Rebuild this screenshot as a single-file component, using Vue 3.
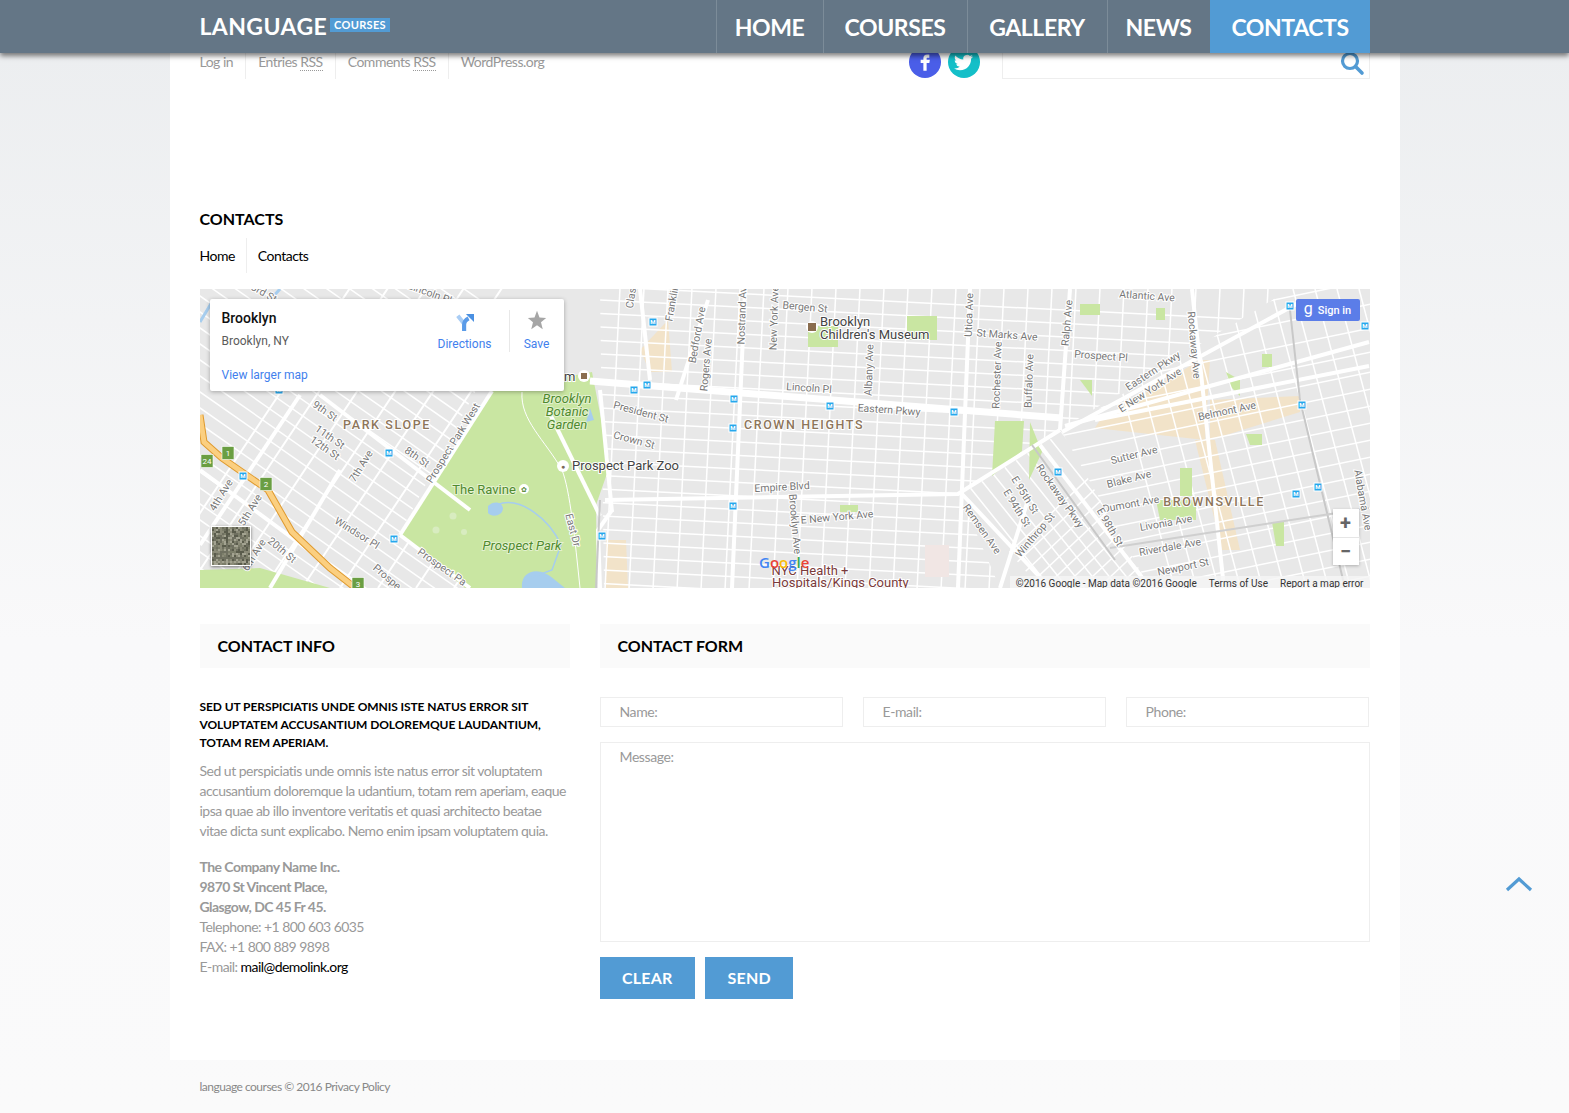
<script setup>
// roads are generated as families of parallel lines, each family clipped to its district
function family(x1, y1, x2, y2, dx, dy, n, w = 1.5) {
  const out = []
  for (let i = 0; i < n; i++) {
    out.push({ x1: x1 + dx * i, y1: y1 + dy * i, x2: x2 + dx * i, y2: y2 + dy * i, w })
  }
  return out
}

const parkSlope = [
  ...family(180, 90, 640, 412, 0, 16, 34),
  ...family(150, 588, 350, 288, 38, 0, 14, 2),
]
const centre = [
  ...family(590, 286, 1300, 322, 0, 13.5, 24),
  ...family(620, 288, 605, 590, 24, 0, 30),
]
const brownsville = [
  ...family(1040, 440, 1400, 366, 0, 17, 18),
  ...family(1040, 300, 1400, 226, 0, 24, 6),
  ...family(1095, 289, 1175, 590, 22, 0, 14),
]
const diagonal = [
  ...family(900, 400, 1140, 700, 17, 0, 18),
  ...family(980, 580, 1140, 430, 0, 17, 10),
]

const thickRoads = [
  'M590 381 L1062 418',
  'M1062 432 L1300 302',
  'M1095 420 L1369 366',
  'M1065 426 L1369 342',
  'M605 500 L958 494 L1060 430',
  'M745 289 L732 588',
  'M970 289 L958 588',
  'M1070 289 L1060 430',
  'M1192 289 L1224 588',
  'M708 300 L676 400',
  'M548 410 L600 516',
  'M400 535 L492 391',
  'M400 535 L470 588',
  'M962 494 L1050 588',
  'M1040 445 L1150 588',
  'M600 390 L612 512',
  'M612 510 L598 530 L600 588',
  'M1000 588 L1028 500',
  'M340 470 L270 588',
  'M300 395 L200 545',
  'M200 470 L360 588',
  'M320 395 L470 510',
  'M640 289 L650 380',
]

const greens = [
  'M400 533 L492 391 L592 372 L610 465 L596 505 L597 588 L465 588 Z',
  'M808 326 L838 326 L838 347 L808 347 Z',
  'M907 316 L937 316 L937 340 L907 340 Z',
  'M995 421 L1024 421 L1022 451 L992 476 Z',
  'M1030 422 L1042 452 L1029 480 Z',
  'M1080 304 L1100 304 L1100 315 L1080 315 Z',
  'M1156 308 L1165 308 L1165 320 L1156 320 Z',
  'M1226 372 L1240 380 L1240 396 L1232 388 Z',
  'M1262 354 L1272 354 L1272 367 L1262 367 Z',
  'M1180 468 L1192 468 L1192 496 L1180 496 Z',
  'M1156 500 L1196 500 L1196 520 L1160 520 Z',
  'M1272 522 L1284 522 L1284 546 L1276 546 Z',
  'M840 505 L858 505 L858 512 L840 512 Z',
  'M200 588 L200 570 L260 568 L330 588 Z',
  'M1246 434 L1262 434 L1262 445 L1250 445 Z',
  'M1080 380 L1092 380 L1092 396 Z',
]

const beige = [
  'M1100 420 L1200 360 L1210 360 L1205 440 L1095 428 Z',
  'M1210 400 L1300 396 L1300 412 L1210 440 Z',
  'M1195 440 L1215 440 L1240 550 L1222 550 Z',
  'M640 350 L668 320 L672 372 L650 372 Z',
  'M606 540 L626 540 L628 588 L606 588 Z',
]

const transit = [
  [653, 322], [634, 390], [647, 385], [734, 399], [830, 406], [954, 412], [389, 453], [394, 539],
  [602, 536], [733, 506], [1058, 472], [1302, 405], [1318, 487], [1296, 494], [1365, 326], [1290, 306],
  [279, 390], [733, 428], [243, 476],
]

const shields = [
  { t: '1', x: 228, y: 453 },
  { t: '2', x: 266, y: 484 },
  { t: '3', x: 358, y: 584 },
  { t: '24', x: 207, y: 461 },
]

const streets = [
  ['3rd St', 264, 293, 30], ['Lincoln Pl', 430, 293, 20], ['Clas', 631, 298, -80], ['Franklin', 672, 303, -80],
  ['Bedford Ave', 697, 335, -80], ['Rogers Ave', 706, 365, -85], ['Nostrand Ave', 742, 313, -88],
  ['New York Ave', 774, 318, -88], ['Bergen St', 805, 307, 5], ['Albany Ave', 869, 370, -88],
  ['Utica Ave', 969, 315, -88], ['St Marks Ave', 1007, 335, 4], ['Ralph Ave', 1067, 323, -85],
  ['Atlantic Ave', 1147, 296, 4], ['Rockaway Ave', 1194, 345, 85], ['Prospect Pl', 1101, 356, 4],
  ['Rochester Ave', 997, 375, -88], ['Buffalo Ave', 1029, 381, -88], ['Lincoln Pl', 809, 388, 4],
  ['Eastern Pkwy', 889, 410, 4], ['Eastern Pkwy', 1153, 371, -33], ['E New York Ave', 1150, 390, -33],
  ['Belmont Ave', 1227, 411, -12], ['President St', 641, 412, 15], ['Crown St', 634, 440, 15],
  ['Empire Blvd', 782, 487, -3], ['Sutter Ave', 1134, 455, -14], ['Blake Ave', 1129, 479, -14],
  ['Dumont Ave', 1131, 504, -10], ['Livonia Ave', 1166, 523, -10], ['Riverdale Ave', 1170, 547, -10],
  ['Newport St', 1183, 567, -12], ['E New York Ave', 837, 517, -5], ['Brooklyn Ave', 795, 524, 85],
  ['Alabama Ave', 1363, 500, 80], ['Rockaway Pkwy', 1060, 496, 55], ['E 95th St', 1025, 495, 58],
  ['E 94th St', 1017, 508, 58], ['E 98th St', 1110, 527, 60], ['Remsen Ave', 982, 529, 55],
  ['Winthrop St', 1035, 535, -50], ['9th St', 325, 411, 35], ['11th St', 330, 437, 35],
  ['12th St', 325, 448, 35], ['8th St', 417, 457, 35], ['7th Ave', 361, 466, -58],
  ['Prospect Park West', 453, 443, -58], ['4th Ave', 221, 495, -58], ['5th Ave', 250, 510, -58],
  ['6th Ave', 254, 555, -58], ['20th St', 282, 550, 40], ['Windsor Pl', 357, 533, 32],
  ['Prospect Pa', 442, 567, 35], ['Prospe', 387, 577, 40], ['East Dr', 573, 530, 75],
]

// speckle for the satellite thumbnail
const speckle = []
for (let y = 0; y < 19; y++) {
  for (let x = 0; x < 19; x++) {
    const v = (x * 37 + y * 61 + x * y * 13 + (x ^ y) * 7) % 5
    speckle.push({ x: x * 2, y: y * 2, fill: ['#6f7060', '#8b8b78', '#a3a391', '#5a5c4c', '#7c7e6a'][v] })
  }
}

const nav = ['HOME', 'COURSES', 'GALLERY', 'NEWS', 'CONTACTS']
const topLinks = [
  { text: 'Log in' },
  { text: 'Entries ', abbr: 'RSS' },
  { text: 'Comments ', abbr: 'RSS' },
  { text: 'WordPress.org' },
]
</script>

<template>
  <header class="header">
    <div class="header-inner">
      <a class="logo">LANGUAGE<span class="logo-badge">COURSES</span></a>
      <nav class="nav">
        <a v-for="item in nav" :key="item" class="nav-item" :class="{ active: item === 'CONTACTS' }">{{ item }}</a>
      </nav>
    </div>
  </header>

  <div class="page">
    <div class="top-row">
      <ul class="top-links">
        <li v-for="link in topLinks" :key="link.text">
          {{ link.text }}<abbr v-if="link.abbr">{{ link.abbr }}</abbr>
        </li>
      </ul>
      <div class="social">
        <span class="circle fb">
          <svg viewBox="0 0 24 24" width="26" height="26"><path fill="#fff" d="M14 8h2V5h-2c-2.2 0-3.5 1.4-3.5 3.5V10H8v3h2.5v7h3v-7H16l.5-3h-3V8.6c0-.4.2-.6.5-.6z" /></svg>
        </span>
        <span class="circle tw">
          <svg viewBox="0 0 24 24" width="19" height="19"><path fill="#fff" d="M23.953 4.57a10 10 0 01-2.825.775 4.958 4.958 0 002.163-2.723c-.951.555-2.005.959-3.127 1.184a4.92 4.92 0 00-8.384 4.482C7.69 8.095 4.067 6.13 1.64 3.162a4.822 4.822 0 00-.666 2.475c0 1.71.87 3.213 2.188 4.096a4.904 4.904 0 01-2.228-.616v.06a4.923 4.923 0 003.946 4.827 4.996 4.996 0 01-2.212.085 4.936 4.936 0 004.604 3.417 9.867 9.867 0 01-6.102 2.105c-.39 0-.779-.023-1.17-.067a13.995 13.995 0 007.557 2.209c9.053 0 13.998-7.496 13.998-13.985 0-.21 0-.42-.015-.63A9.935 9.935 0 0024 4.59z" /></svg>
        </span>
      </div>
      <div class="search">
        <svg viewBox="0 0 26 26" width="26" height="26"><circle cx="11" cy="11" r="7.5" fill="none" stroke="#529bd4" stroke-width="3.2" /><path d="M16.5 16.5 L23 23" stroke="#529bd4" stroke-width="3.6" stroke-linecap="round" /></svg>
      </div>
    </div>

    <h1 class="page-title">CONTACTS</h1>
    <ul class="crumbs">
      <li>Home</li>
      <li>Contacts</li>
    </ul>

    <div class="map">
      <svg class="map-svg" viewBox="200 289 1170 299" width="1170" height="299">
        <defs>
          <clipPath id="c-slope"><path d="M200 289 L530 289 L400 533 L470 588 L200 588 Z" /></clipPath>
          <clipPath id="c-centre"><path d="M600 289 L1290 289 L1060 430 L960 495 L1000 588 L604 588 Z" /></clipPath>
          <clipPath id="c-brown"><path d="M1062 432 L1290 289 L1370 289 L1370 588 L1150 588 Z" /></clipPath>
          <clipPath id="c-diag"><path d="M960 495 L1062 432 L1150 588 L1040 588 Z" /></clipPath>
        </defs>
        <rect x="200" y="289" width="1170" height="299" fill="#e8e8e8" />
        <path v-for="(d, i) in beige" :key="'b' + i" :d="d" fill="#f2e3c9" />

        <g clip-path="url(#c-slope)" stroke="#fff">
          <line v-for="(l, i) in parkSlope" :key="i" :x1="l.x1" :y1="l.y1" :x2="l.x2" :y2="l.y2" :stroke-width="l.w" />
        </g>
        <g clip-path="url(#c-centre)" stroke="#fff">
          <line v-for="(l, i) in centre" :key="i" :x1="l.x1" :y1="l.y1" :x2="l.x2" :y2="l.y2" :stroke-width="l.w" />
        </g>
        <g clip-path="url(#c-brown)" stroke="#fff">
          <line v-for="(l, i) in brownsville" :key="i" :x1="l.x1" :y1="l.y1" :x2="l.x2" :y2="l.y2" :stroke-width="l.w" />
        </g>
        <g clip-path="url(#c-diag)" stroke="#fff">
          <line v-for="(l, i) in diagonal" :key="i" :x1="l.x1" :y1="l.y1" :x2="l.x2" :y2="l.y2" :stroke-width="l.w" />
        </g>

        <path v-for="(d, i) in greens" :key="'g' + i" :d="d" fill="#c9e6a2" />

        <path v-for="(d, i) in thickRoads" :key="'r' + i" :d="d" fill="none" stroke="#fff" stroke-width="4" />
        <path d="M590 381 L1062 418" fill="none" stroke="#fff" stroke-width="7" />

        <path d="M200 415 L204 442 L222 458 L268 490 L292 532 L330 568 L358 590" fill="none" stroke="#df9a2e" stroke-width="7" />
        <path d="M200 415 L204 442 L222 458 L268 490 L292 532 L330 568 L358 590" fill="none" stroke="#fbcf80" stroke-width="5" />

        <path d="M1290 310 L1300 400 L1345 588" fill="none" stroke="#c8c8c8" stroke-width="2" />
        <path d="M1032 445 L1115 560" fill="none" stroke="#c8c8c8" stroke-width="2" />
        <path d="M1110 548 L1369 508" fill="none" stroke="#cfcfcf" stroke-width="2" />
        <path d="M600 500 L596 588" fill="none" stroke="#c8c8c8" stroke-width="2" />

        <!-- park water and paths -->
        <path d="M488 506 C494 500 502 502 503 508 C503 516 492 518 488 513 Z M522 588 C520 570 540 565 555 580 L565 588 Z" fill="#a6cdee" />
        <path d="M497 505 C520 495 550 520 561 545 L552 570 L530 578" fill="none" stroke="#a6cdee" stroke-width="1.5" />
        <path d="M590 408 L594 420 L586 422 Z" fill="#a6cdee" />
        <path d="M270 300 L280 289 M200 322 L212 302" fill="none" stroke="#a6cdee" stroke-width="3" />
        <path d="M522 392 C520 420 545 440 562 470 C570 490 575 540 580 588" fill="none" stroke="#fff" stroke-width="1" />
        <circle cx="453" cy="516" r="3.5" fill="#d8ecc0" /><circle cx="436" cy="530" r="3.5" fill="#d8ecc0" /><circle cx="464" cy="532" r="3" fill="#d8ecc0" />

        <rect x="925" y="545" width="24" height="32" fill="#f1e6e4" />

        <g v-for="(m, i) in transit" :key="'t' + i">
          <rect :x="m[0] - 4.5" :y="m[1] - 4.5" width="9" height="9" fill="#fff" />
          <rect :x="m[0] - 3.5" :y="m[1] - 3.5" width="7" height="7" fill="#27a7ec" />
          <text :x="m[0]" :y="m[1] + 2.2" class="m-glyph">M</text>
        </g>

        <g v-for="s in shields" :key="s.t">
          <rect :x="s.x - 6" :y="s.y - 6.5" width="12" height="13" fill="#6a9e42" stroke="#fff" stroke-width="0.6" />
          <text :x="s.x" :y="s.y + 3" class="shield">{{ s.t }}</text>
        </g>

        <text
          v-for="s in streets"
          :key="s[0] + s[1]"
          class="street"
          :transform="`translate(${s[1]} ${s[2]}) rotate(${s[3]})`"
        >{{ s[0] }}</text>

        <text x="387" y="429" class="hood">PARK SLOPE</text>
        <text x="804" y="429" class="hood">CROWN HEIGHTS</text>
        <text x="1214" y="506" class="hood">BROWNSVILLE</text>

        <text x="567" y="403" class="park">Brooklyn</text>
        <text x="567" y="416" class="park">Botanic</text>
        <text x="567" y="429" class="park">Garden</text>
        <text x="522" y="550" class="park">Prospect Park</text>
        <text x="484" y="494" class="park upright">The Ravine</text>
        <circle cx="524" cy="489" r="5" fill="#fff" />
        <text x="524" y="492" class="pin-glyph">✿</text>

        <circle cx="563" cy="466" r="6" fill="#fff" />
        <text x="563" y="469" class="pin-glyph dark">●</text>
        <text x="572" y="470" class="poi">Prospect Park Zoo</text>
        <circle cx="812" cy="327" r="6" fill="#fff" />
        <rect x="808" y="323" width="8" height="8" fill="#8a6d4f" />
        <text x="820" y="326" class="poi">Brooklyn</text>
        <text x="820" y="339" class="poi">Children's Museum</text>
        <text x="564" y="381" class="poi">m</text>
        <circle cx="584" cy="376" r="6" fill="#fff" />
        <rect x="581" y="373" width="6" height="6" fill="#8a6d4f" />

        <text x="810" y="575" class="health">NYC Health +</text>
        <text x="772" y="587" class="health left">Hospitals/Kings County</text>
        <text x="759" y="568" class="google"><tspan fill="#4285f4">G</tspan><tspan fill="#ea4335">o</tspan><tspan fill="#fbbc05">o</tspan><tspan fill="#4285f4">g</tspan><tspan fill="#34a853">l</tspan><tspan fill="#ea4335">e</tspan></text>
      </svg>

      <div class="place-card">
        <div class="place-main">
          <div class="place-name">Brooklyn</div>
          <div class="place-addr">Brooklyn, NY</div>
          <a class="place-link">View larger map</a>
        </div>
        <div class="place-action directions">
          <svg class="dir-icon" viewBox="0 0 20 20" width="18" height="18">
            <path d="M9 20 V12 L2 3" fill="none" stroke="#a9cdf5" stroke-width="4.5" />
            <path d="M9 20 V13 C9 9 12 7 14 6" fill="none" stroke="#5a9be8" stroke-width="4.5" />
            <path d="M11 1 H20 V10 Z" fill="#4a90e2" />
          </svg>
          <span>Directions</span>
        </div>
        <div class="place-action save">
          <svg class="star-icon" viewBox="0 0 24 24" width="20" height="20"><path fill="#a6a6a6" d="M12 1 L15 9 L23 9.6 L16.8 14.6 L18.9 23 L12 18.4 L5.1 23 L7.2 14.6 L1 9.6 L9 9 Z" /></svg>
          <span>Save</span>
        </div>
      </div>

      <div class="sign-in"><span class="g">g</span>Sign in</div>

      <div class="zoom-box">
        <span class="zoom-btn">+</span>
        <span class="zoom-btn">−</span>
      </div>

      <div class="sat-thumb">
        <svg viewBox="0 0 38 38" width="38" height="38">
          <rect v-for="(s, i) in speckle" :key="i" :x="s.x" :y="s.y" width="2" height="2" :fill="s.fill" />
        </svg>
      </div>

      <div class="attribution">
        <span>©2016 Google - Map data ©2016 Google</span>
        <span>Terms of Use</span>
        <span>Report a map error</span>
      </div>
    </div>

    <div class="columns">
      <section class="info">
        <h2 class="box-title">CONTACT INFO</h2>
        <p class="lead">Sed ut perspiciatis unde omnis iste natus error sit voluptatem accusantium doloremque laudantium, totam rem aperiam.</p>
        <p class="text">Sed ut perspiciatis unde omnis iste natus error sit voluptatem accusantium doloremque la udantium, totam rem aperiam, eaque ipsa quae ab illo inventore veritatis et quasi architecto beatae vitae dicta sunt explicabo. Nemo enim ipsam voluptatem quia.</p>
        <address class="address">
          <strong>The Company Name Inc.</strong>
          <strong>9870 St Vincent Place,</strong>
          <strong>Glasgow, DC 45 Fr 45.</strong>
          <span>Telephone: +1 800 603 6035</span>
          <span>FAX: +1 800 889 9898</span>
          <span>E-mail: <a class="mail">mail@demolink.org</a></span>
        </address>
      </section>

      <section class="form">
        <h2 class="box-title">CONTACT FORM</h2>
        <div class="fields">
          <div class="field">Name:</div>
          <div class="field">E-mail:</div>
          <div class="field">Phone:</div>
        </div>
        <div class="message">Message:</div>
        <div class="buttons">
          <button class="btn clear">CLEAR</button>
          <button class="btn send">SEND</button>
        </div>
      </section>
    </div>
  </div>

  <footer class="footer">language courses © 2016 Privacy Policy</footer>

  <svg class="to-top" viewBox="0 0 28 16" width="28" height="16"><path d="M2 14 L14 3 L26 14" fill="none" stroke="#529bd4" stroke-width="3.2" /></svg>
</template>

<style>
html,
body {
  margin: 0;
}
body {
  background: linear-gradient(#ebedef 0, #f9f9fa 640px, #fafafa 100%);
  min-height: 1113px;
}
</style>

<style scoped>
.header {
  position: absolute;
  top: 0;
  left: 0;
  right: 0;
  height: 53px;
  background: #647686;
  box-shadow: 0 3px 5px rgba(0, 0, 0, 0.5);
  z-index: 10;
}
.header-inner {
  width: 1170px;
  margin: 0 auto;
  height: 100%;
  display: flex;
  justify-content: space-between;
  align-items: stretch;
  font-family: Lato, sans-serif;
  color: #fff;
}
.logo {
  display: flex;
  align-items: center;
  font-size: 23px;
  font-weight: 700;
  letter-spacing: 0.4px;
  margin-top: -1px;
}
.logo-badge {
  margin-left: 3px;
  margin-top: -3px;
  background: #529bd4;
  font-size: 11px;
  line-height: 14px;
  padding: 0 4px;
  letter-spacing: 0.3px;
}
.nav {
  display: grid;
  grid-template-columns: 107px 144px 140px 103px 160px;
}
.nav-item {
  display: flex;
  align-items: center;
  justify-content: center;
  font-size: 23px;
  font-weight: 700;
  letter-spacing: -0.4px;
  border-left: 1px solid rgba(255, 255, 255, 0.16);
}
.nav-item.active {
  background: #529bd4;
  border-left-color: #529bd4;
}

.page {
  width: 1170px;
  margin: 0 auto;
  padding: 46px 30px 61px;
  background: #fff;
  font-family: Lato, sans-serif;
  font-size: 14px;
  color: #999;
}

.top-row {
  display: flex;
  height: 33px;
}
.top-links {
  list-style: none;
  display: flex;
  margin: 0;
  padding: 0;
  flex: 1;
  color: #999;
  letter-spacing: -0.5px;
}
.top-links li {
  padding: 7px 12px 0;
  border-right: 1px solid #eee;
  line-height: 17px;
}
.top-links li:first-child {
  padding-left: 0;
}
.top-links li:last-child {
  border-right: 0;
}
abbr {
  border-bottom: 1px dotted #999;
}
.social {
  display: flex;
  gap: 7px;
  margin-right: 22px;
}
.circle {
  width: 32px;
  height: 32px;
  border-radius: 50%;
  display: flex;
  align-items: center;
  justify-content: center;
}
.fb {
  background: #4a5ee8;
}
.tw {
  background: #14bfc8;
}
.search {
  width: 362px;
  border: 1px solid #eee;
  display: flex;
  align-items: center;
  justify-content: flex-end;
  padding-right: 4px;
  height: 31px;
}

.page-title {
  margin: 131px 0 0;
  font-size: 16px;
  line-height: 18px;
  font-weight: 700;
  color: #000;
}
.crumbs {
  list-style: none;
  display: flex;
  margin: 10px 0 0;
  padding: 0;
  height: 35px;
  color: #000;
  letter-spacing: -0.5px;
}
.crumbs li {
  line-height: 35px;
  padding-right: 11px;
}
.crumbs li:first-child {
  border-right: 1px solid #eee;
}
.crumbs li + li {
  padding-left: 11px;
}

.map {
  position: relative;
  margin-top: 16px;
  width: 1170px;
  height: 299px;
  overflow: hidden;
  font-family: Roboto, sans-serif;
}
.map-svg {
  display: block;
}
.street {
  font-family: Roboto, sans-serif;
  font-size: 10.5px;
  fill: #777;
  text-anchor: middle;
  dominant-baseline: central;
  paint-order: stroke;
  stroke: #fff;
  stroke-width: 2px;
}
.hood {
  font-family: Roboto, sans-serif;
  font-size: 12.5px;
  font-weight: 500;
  letter-spacing: 1.6px;
  fill: #8d755a;
  text-anchor: middle;
  paint-order: stroke;
  stroke: #fff;
  stroke-width: 2px;
}
.park {
  font-family: Roboto, sans-serif;
  font-size: 13px;
  font-style: italic;
  fill: #4f8a2e;
  text-anchor: middle;
  paint-order: stroke;
  stroke: #e3f1cf;
  stroke-width: 2px;
}
.park.upright {
  font-style: normal;
}
.poi {
  font-family: Roboto, sans-serif;
  font-size: 13px;
  fill: #444;
  paint-order: stroke;
  stroke: #fff;
  stroke-width: 2px;
}
.pin-glyph {
  font-size: 7px;
  fill: #5a8a3a;
  text-anchor: middle;
}
.pin-glyph.dark {
  fill: #7a6a5a;
}
.health {
  font-family: Roboto, sans-serif;
  font-size: 13px;
  fill: #7a3b3b;
  text-anchor: middle;
  paint-order: stroke;
  stroke: #fff;
  stroke-width: 2px;
}
.health.left {
  text-anchor: start;
}
.google {
  font-family: 'Open Sans', sans-serif;
  font-size: 15px;
  font-weight: 600;
}
.shield {
  font-family: Roboto, sans-serif;
  font-size: 8px;
  fill: #fff;
  text-anchor: middle;
}
.m-glyph {
  font-family: Roboto, sans-serif;
  font-size: 6px;
  font-weight: 700;
  fill: #fff;
  text-anchor: middle;
}

.place-card {
  position: absolute;
  left: 10px;
  top: 10px;
  width: 354px;
  height: 92px;
  background: #fff;
  box-shadow: 0 1px 4px rgba(0, 0, 0, 0.3);
  border-radius: 2px;
  display: flex;
}
.place-main {
  flex: 1;
  padding: 11px 0 0 12px;
}
.place-name {
  font-size: 14px;
  font-weight: 500;
  line-height: 17px;
  color: #111;
}
.place-addr {
  margin-top: 7px;
  font-size: 12px;
  line-height: 15px;
  color: #5b5b5b;
}
.place-link {
  display: block;
  margin-top: 19px;
  font-size: 12px;
  line-height: 15px;
  color: #427fed;
}
.place-action {
  display: flex;
  flex-direction: column;
  align-items: center;
  height: 42px;
  margin-top: 11px;
  font-size: 12px;
  color: #427fed;
}
.place-action span {
  margin-top: 5px;
  line-height: 14px;
}
.directions {
  width: 70px;
  padding-right: 9px;
  border-right: 1px solid #e8e8e8;
}
.dir-icon {
  margin: 3px 0 1px;
}
.star-icon {
  margin-bottom: 2px;
}
.save {
  width: 54px;
}
.sign-in {
  position: absolute;
  top: 10px;
  right: 10px;
  width: 64px;
  height: 22px;
  background: #5b7de8;
  border-radius: 2px;
  color: #fff;
  font-size: 11px;
  font-weight: 500;
  display: flex;
  align-items: center;
  justify-content: center;
  gap: 5px;
}
.g {
  font-size: 16px;
  font-weight: 400;
  line-height: 15px;
  margin-top: -3px;
}
.zoom-box {
  position: absolute;
  right: 11px;
  top: 220px;
  width: 26px;
  height: 56px;
  background: #fff;
  box-shadow: 0 1px 3px rgba(0, 0, 0, 0.25);
  display: flex;
  flex-direction: column;
}
.zoom-btn {
  flex: 1;
  display: flex;
  align-items: center;
  justify-content: center;
  font-size: 20px;
  font-weight: 700;
  color: #666;
}
.zoom-btn + .zoom-btn {
  border-top: 1px solid #e6e6e6;
}
.sat-thumb {
  position: absolute;
  left: 11px;
  top: 237px;
  width: 38px;
  height: 38px;
  border: 1px solid #fff;
  box-shadow: 0 1px 3px rgba(0, 0, 0, 0.5);
  line-height: 0;
}
.attribution {
  position: absolute;
  right: 0;
  bottom: 0;
  height: 12px;
  padding: 0 6px;
  background: rgba(245, 245, 245, 0.8);
  display: flex;
  gap: 12px;
  font-size: 10px;
  line-height: 15px;
  color: #333;
}

.columns {
  display: flex;
  gap: 30px;
  margin-top: 36px;
}
.info {
  width: 370px;
  flex: none;
}
.form {
  flex: 1;
}
.box-title {
  margin: 0;
  height: 44px;
  padding-left: 18px;
  background: #fafafa;
  font-size: 16px;
  line-height: 43px;
  font-weight: 700;
  color: #000;
}
.lead {
  margin: 30px 0 0;
  font-size: 12px;
  line-height: 18px;
  font-weight: 700;
  letter-spacing: -0.08px;
  color: #000;
  text-transform: uppercase;
}
.text {
  margin: 9px 0 0;
  line-height: 20px;
  letter-spacing: -0.5px;
}
.address {
  margin-top: 16px;
  font-style: normal;
  line-height: 20px;
  letter-spacing: -0.55px;
  display: flex;
  flex-direction: column;
}
.mail {
  color: #000;
}
.fields {
  display: flex;
  gap: 20px;
  margin-top: 29px;
  padding-right: 1px;
}
.field {
  flex: 1;
  height: 28px;
  line-height: 28px;
  padding-left: 18px;
  border: 1px solid #eee;
  letter-spacing: -0.4px;
  text-indent: 1px;
}
.message {
  margin-top: 15px;
  padding: 5px 19px;
  box-sizing: border-box;
  height: 200px;
  border: 1px solid #eee;
  line-height: 18px;
  letter-spacing: -0.4px;
}
.buttons {
  display: flex;
  gap: 10px;
  margin-top: 15px;
}
.btn {
  border: 0;
  height: 42px;
  background: #529bd4;
  color: #fff;
  font-family: Lato, sans-serif;
  font-size: 16px;
  font-weight: 700;
  letter-spacing: 0.2px;
  padding: 0 22.5px 2px;
}

.footer {
  width: 1170px;
  margin: 0 auto;
  padding-top: 19px;
  height: 35px;
  font-family: Lato, sans-serif;
  font-size: 12px;
  line-height: 16px;
  letter-spacing: -0.5px;
  color: #888;
}
.to-top {
  position: absolute;
  left: 1505px;
  top: 876px;
}
</style>
